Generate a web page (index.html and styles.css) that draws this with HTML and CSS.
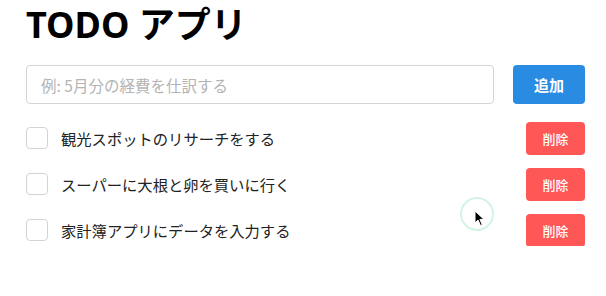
FILE: index.html
```html
<!DOCTYPE html>
<html lang="ja">
<head>
<meta charset="utf-8">
<title>TODO アプリ</title>
<link rel="stylesheet" href="styles.css">
</head>
<body>
<main class="app">
  <h1 class="title">TODO アプリ</h1>
  <form class="add-form">
    <input class="add-input" type="text" placeholder="例: 5月分の経費を仕訳する">
    <button class="add-btn" type="button">追加</button>
  </form>
  <ul class="todo-list">
    <li class="todo-item">
      <span class="check"></span>
      <span class="todo-text">観光スポットのリサーチをする</span>
      <button class="del-btn" type="button">削除</button>
    </li>
    <li class="todo-item">
      <span class="check"></span>
      <span class="todo-text">スーパーに大根と卵を買いに行く</span>
      <button class="del-btn" type="button">削除</button>
    </li>
    <li class="todo-item">
      <span class="check"></span>
      <span class="todo-text">家計簿アプリにデータを入力する</span>
      <button class="del-btn" type="button">削除</button>
    </li>
  </ul>
</main>
<div class="cursor-ring"></div>
<svg class="cursor" width="12" height="18" viewBox="0 0 12 18"><path d="M1 1 L1 13 L4 10 L6.5 15.5 L8.3 14.7 L5.9 9.4 L10 9.4 Z" fill="#000" stroke="#fff" stroke-width="1"/></svg>
</body>
</html>
```

FILE: styles.css
```css
* { box-sizing: border-box; }
html, body { margin: 0; padding: 0; background: #fff; }
body {
  font-family: "Noto Sans", "Noto Sans CJK JP", sans-serif;
  color: #222;
}
.app {
  padding: 0 21px 0 26px;
}
.title {
  margin: 0;
  padding-top: 0;
  font-size: 36px;
  line-height: 50px;
  font-weight: 700;
  color: #000;
}
.add-form {
  display: flex;
  gap: 19px;
  margin-top: 15px;
}
.add-input {
  flex: 1;
  height: 39px;
  border: 1px solid #d4d4da;
  border-radius: 4px;
  padding: 0 14px;
  font-family: "Noto Sans CJK JP", sans-serif;
  font-size: 15.5px;
  color: #333;
  outline: none;
}
.add-input::placeholder { color: #b4b4b4; }
.add-btn {
  width: 72px;
  height: 39px;
  border: none;
  border-radius: 4px;
  background: #2a8be3;
  color: #fff;
  font-family: "Noto Sans CJK JP", sans-serif;
  font-size: 15px;
  font-weight: 700;
}
.todo-list {
  list-style: none;
  margin: 18px 0 0;
  padding: 0;
  display: flex;
  flex-direction: column;
  gap: 14px;
}
.todo-item {
  display: flex;
  align-items: center;
  height: 32px;
}
.check {
  width: 22px;
  height: 22px;
  border: 1px solid #d2d2d8;
  border-radius: 4px;
  flex: none;
}
.todo-text {
  margin-left: 13px;
  flex: 1;
  font-family: "Noto Sans CJK JP", sans-serif;
  font-size: 15.3px;
  color: #222;
}
.del-btn {
  width: 59px;
  height: 33px;
  border: none;
  border-radius: 4px;
  background: #ff5656;
  color: #fff;
  font-family: "Noto Sans CJK JP", sans-serif;
  font-size: 13px;
  font-weight: 500;
}
.cursor-ring {
  position: absolute;
  left: 460px;
  top: 197px;
  width: 34px;
  height: 34px;
  border: 2px solid #d3f4e3;
  border-radius: 50%;
}
.cursor {
  position: absolute;
  left: 474px;
  top: 210px;
}
```
